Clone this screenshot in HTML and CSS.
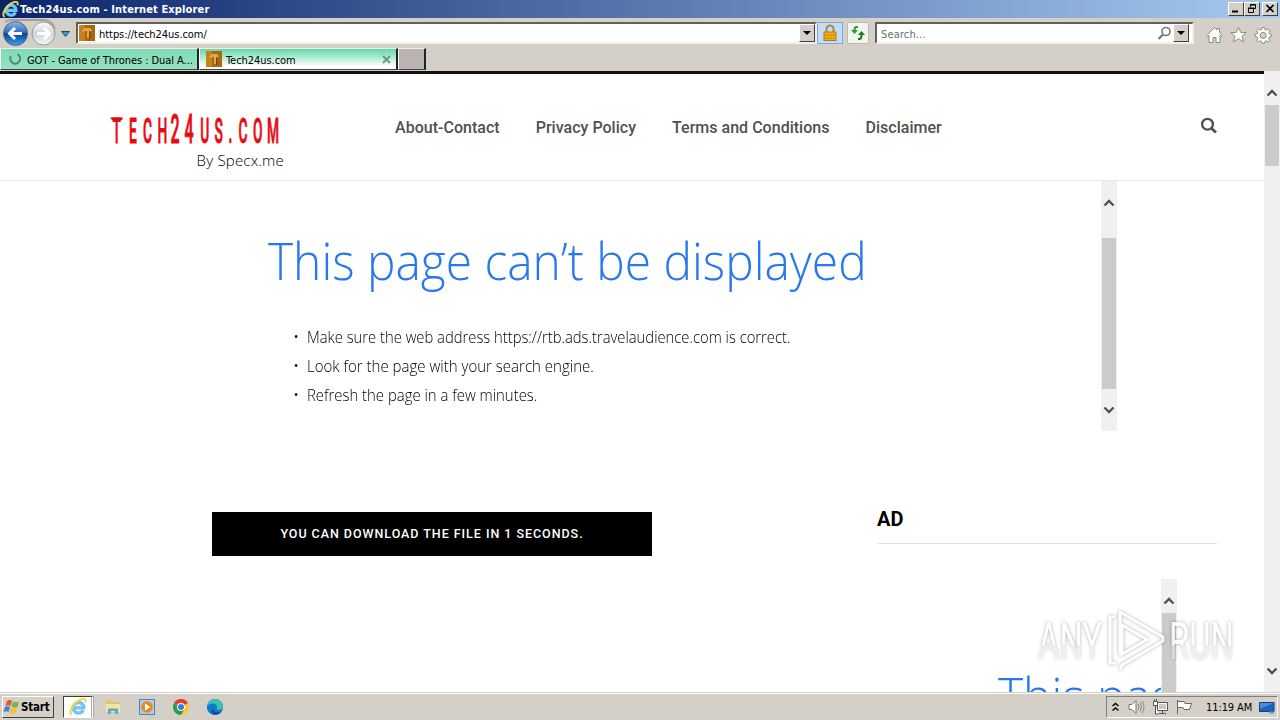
FILE: index.html
```html
<!DOCTYPE html>
<html lang="en">
<head>
    <meta charset="UTF-8">
    <title>Tech24us.com</title>
    <link rel="stylesheet" href="styles.css">
</head>
<body>
    <!-- shared icons -->
    <svg class="defs" width="0" height="0">
        <symbol id="ie" viewBox="0 0 16 16">
            <path d="M12.700 10.800A4.700 4.700 0 1 1 13.200 8.800H5" fill="none" stroke="#6cc5f4" stroke-width="3"/>
            <path d="M2.500 15C-1.500 13 4.500 3.500 10.500 1.300c3.500-1.200 5 .2 4 2.700" fill="none" stroke="#f5d83c" stroke-width="1.800"/>
        </symbol>
        <symbol id="favicon" viewBox="0 0 16 16">
            <rect width="16" height="16" fill="#a9670f"/>
            <path d="M0 0h6v16H0z" fill="#c5811c"/>
            <path d="M3 5.500 6 3h5l2 2-1 1.500L10 6v7H8V6H6L4 7z" fill="#e2a84e"/>
            <path d="M10 6v8h1.500V7z" fill="#7a4808"/>
        </symbol>
        <symbol id="up" viewBox="0 0 12 10">
            <path d="M1.500 7.500 6 3l4.500 4.500" fill="none" stroke="#505050" stroke-width="2.300"/>
        </symbol>
        <symbol id="down" viewBox="0 0 12 10">
            <path d="M1.500 2.500 6 7l4.500-4.500" fill="none" stroke="#505050" stroke-width="2.300"/>
        </symbol>
    </svg>

    <div class="titlebar">
        <svg class="title-icon" width="17" height="17"><use href="#ie"/></svg>
        <span class="title-text">Tech24us.com - Internet Explorer</span>
        <div class="win-buttons">
            <span class="win-btn"><svg width="14" height="11"><path d="M3 8.500h6" stroke="#000" stroke-width="2"/></svg></span>
            <span class="win-btn"><svg width="14" height="11"><path d="M5.500 4V1.500h5v4H9M5 2h6" fill="none" stroke="#000"/><path d="M3.500 5.500h5v4h-5zM3 5h6" fill="none" stroke="#000"/></svg></span>
            <span class="win-btn close"><svg width="14" height="11"><path d="M3.500 2l7 7M10.500 2l-7 7" stroke="#000" stroke-width="1.700"/></svg></span>
        </div>
    </div>

    <div class="toolbar">
        <svg class="nav-buttons" width="74" height="30" viewBox="0 0 74 30">
            <defs>
                <linearGradient id="blue" x1="0" y1="0" x2="0" y2="1">
                    <stop offset="0" stop-color="#8fb6e6"/><stop offset=".48" stop-color="#2f68bd"/>
                    <stop offset=".5" stop-color="#0b3d97"/><stop offset="1" stop-color="#39a6ee"/>
                </linearGradient>
                <linearGradient id="grey" x1="0" y1="0" x2="0" y2="1">
                    <stop offset="0" stop-color="#fff"/><stop offset=".5" stop-color="#cdd3da"/><stop offset="1" stop-color="#f4f7fa"/>
                </linearGradient>
            </defs>
            <path d="M5 4q5-3 12-2h26q9 0 12 9" fill="none" stroke="#a5a09a" stroke-width="2"/>
            <circle cx="15.500" cy="15.500" r="12" fill="url(#blue)" stroke="#52657f"/>
            <path d="M22 15.500H10M15 10l-5.500 5.500L15 21" fill="none" stroke="#fff" stroke-width="3"/>
            <circle cx="43.500" cy="15.500" r="11.500" fill="url(#grey)" stroke="#9097a0"/>
            <path d="M37 15.500h12M44 10l5.500 5.500L44 21" fill="none" stroke="#fff" stroke-width="3"/>
            <path d="M61.500 13.500h8l-4 5z" fill="#2aa0d8" stroke="#174a78"/>
        </svg>
        <div class="field address">
            <svg width="16" height="16"><use href="#favicon"/></svg>
            <span class="url">https://tech24us.com/</span>
            <span class="drop"></span>
        </div>
        <span class="lock">
            <svg width="16" height="18" viewBox="0 0 16 18">
                <path d="M4.500 9V5a3.500 3.500 0 0 1 7 0v4" fill="none" stroke="#a88a45" stroke-width="2"/>
                <rect x="2" y="8" width="12" height="8.500" fill="#efad16" stroke="#b97d0c"/>
                <path d="M2 11h12M2 14h12" stroke="#c98a0b"/>
            </svg>
        </span>
        <span class="refresh">
            <svg width="16" height="16" viewBox="0 0 16 16">
                <path d="M8 2H6.500Q4.500 2 4.500 5" fill="none" stroke="#2f9a35" stroke-width="2"/>
                <path d="M1 5h7l-3.500 4z" fill="#2f9a35"/>
                <path d="M8 14h1.500q2 0 2-4" fill="none" stroke="#207a26" stroke-width="2"/>
                <path d="M8 10h7l-3.500-4z" fill="#207a26"/>
            </svg>
        </span>
        <div class="field search">
            <span class="hint">Search...</span>
            <svg width="15" height="15" viewBox="0 0 15 15"><circle cx="9" cy="5.500" r="4" fill="none" stroke="#777" stroke-width="1.600"/><path d="M6 8.500 1.500 13" stroke="#777" stroke-width="2.200"/></svg>
            <span class="drop"></span>
        </div>
        <svg class="tools" width="70" height="20" viewBox="0 0 70 20">
            <g fill="#fff" stroke="#8d8985">
                <path d="M1.500 10.500 9.500 2.500l2.500 2.500V3.500h2.500V7.500l3 3-1 1-1.500-1.200V17.500h-4v-5h-3v5h-4v-7L2.500 11.500z"/>
                <path d="M33.500 2.500l2.300 5h5.400l-4.200 3.700 1.600 5.800-5.100-3.300-5.100 3.300 1.600-5.800-4.200-3.700h5.400z"/>
                <path d="M57 2.500h2.500l.4 2 1.400.6 1.800-1.200 1.700 1.700-1.100 1.800.6 1.400 2 .4v2.400l-2 .4-.6 1.400 1.100 1.800-1.700 1.700-1.800-1.100-1.400.6-.4 2H57l-.4-2-1.400-.6-1.800 1.100-1.700-1.700 1.100-1.800-.6-1.400-2-.4V9.200l2-.4.6-1.400-1.100-1.800 1.700-1.700 1.800 1.200 1.400-.6z"/>
                <circle cx="58.200" cy="10.400" r="3" fill="#d4d0c8"/>
            </g>
        </svg>
    </div>

    <div class="tabs">
        <div class="tab loading">
            <svg width="14" height="14" viewBox="0 0 14 14"><path d="M9.500 2.200A5 5 0 1 1 3 4" fill="none" stroke="#57877a" stroke-width="2"/></svg>
            <span class="tab-one">GOT - Game of Thrones : Dual A...</span>
        </div>
        <div class="tab active">
            <svg width="16" height="16"><use href="#favicon"/></svg>
            <span class="tab-two">Tech24us.com</span>
            <svg class="tab-close" width="9" height="9"><path d="M1 1l7 7M8 1 1 8" stroke="#6f9487" stroke-width="1.800"/></svg>
        </div>
        <div class="tab new"></div>
    </div>

    <div class="viewport">
        <div class="page">
            <header class="site-header">
                <div class="logo">
                    <svg width="175" height="36" viewBox="0 0 175 36">
                        <g fill="#ea0a12" stroke="#ea0a12" stroke-width=".9" font-family="Roboto, sans-serif" font-weight="500">
                            <text transform="translate(0 31.500) scale(.4 1)" font-size="34.500" x="9 50 85 121 154 189 228 264 299 324 360 395">TECH<tspan font-size="40">24</tspan>US.COM</text>
                        </g>
                        <path d="M1 6.500h13l-1 2.500H3z" fill="#d40d18"/>
                    </svg>
                    <span class="byline">By Specx.me</span>
                </div>
                <nav>
                    <a>About-Contact</a>
                    <a>Privacy Policy</a>
                    <a>Terms and Conditions</a>
                    <a>Disclaimer</a>
                </nav>
                <svg class="find" width="18" height="18" viewBox="0 0 18 18"><circle cx="7.500" cy="7.200" r="5.400" fill="none" stroke="#505050" stroke-width="2.300"/><path d="M11 11l5 4.500" stroke="#505050" stroke-width="2.800"/></svg>
            </header>

            <div class="banner">
                <div class="error">
                    <h1>This page can’t be displayed</h1>
                    <ul>
                        <li><span>Make sure the web address https://rtb.ads.travelaudience.com is correct.</span></li>
                        <li><span class="line-two">Look for the page with your search engine.</span></li>
                        <li><span class="line-three">Refresh the page in a few minutes.</span></li>
                    </ul>
                </div>
                <div class="scrollbar inner">
                    <svg width="12" height="10"><use href="#up"/></svg>
                    <span class="thumb"></span>
                    <svg width="12" height="10"><use href="#down"/></svg>
                </div>
            </div>

            <div class="columns">
                <main>
                    <div class="download">YOU CAN DOWNLOAD THE FILE IN 1 SECONDS.</div>
                </main>
                <aside>
                    <h2>AD</h2>
                    <div class="ad-frame">
                        <div class="ad-error"><h1>This page can’t be displayed</h1></div>
                        <div class="scrollbar ad-scroll">
                            <svg width="12" height="10"><use href="#up"/></svg>
                            <span class="thumb"></span>
                        </div>
                    </div>
                </aside>
            </div>
        </div>
        <div class="scrollbar outer">
            <svg width="12" height="10"><use href="#up"/></svg>
            <span class="thumb"></span>
            <svg class="bottom" width="12" height="10"><use href="#down"/></svg>
        </div>
    </div>

    <div class="taskbar">
        <div class="start">
            <svg width="18" height="16" viewBox="0 0 18 16">
                <path d="M4 2q3-2 5 0L7.500 7q-2-1.500-5 0z" fill="#e2582b"/>
                <path d="M10 2.500q3 1.500 6 0L14.500 8q-3 1.500-6-.5z" fill="#7cb342"/>
                <path d="M2 8q3-1.500 5 0l-1.500 5q-2-1.500-5 0z" fill="#3d7fd6"/>
                <path d="M8 8.500q3 2 6 .5L12.500 14q-3 1.500-6-.5z" fill="#f5bd28"/>
            </svg>
            <span>Start</span>
        </div>
        <div class="task-active"><svg width="18" height="18"><use href="#ie"/></svg></div>
        <svg class="task-icon" width="16" height="16" viewBox="0 0 16 16">
            <path d="M1 3V1.500h5l1 1.500h7v11H1z" fill="#e5c467"/>
            <path d="M1 5h14v8H1z" fill="#f6e3a0"/>
            <path d="M3 15V9.500h10V15h-3v-3H6v3z" fill="#58a9d8"/>
        </svg>
        <svg class="task-icon" width="16" height="16" viewBox="0 0 16 16">
            <rect x=".5" y=".5" width="15" height="15" fill="#a9cdeb" stroke="#4f84b8"/>
            <circle cx="8" cy="8" r="5.800" fill="#f08519"/>
            <path d="M6 4.500 11.500 8 6 11.500z" fill="#fff"/>
        </svg>
        <svg class="task-icon" width="16" height="16" viewBox="0 0 16 16">
            <circle cx="8" cy="8" r="8" fill="#fcc934"/>
            <path d="M8 8 1.070 4A8 8 0 0 1 14.930 4z" fill="#e33b2e"/>
            <path d="M1.070 4A8 8 0 0 0 8 16l3.500-6L8 8z" fill="#2a9d4c"/>
            <circle cx="8" cy="8" r="4" fill="#fff"/>
            <circle cx="8" cy="8" r="3" fill="#3b78e7"/>
        </svg>
        <svg class="task-icon" width="16" height="16" viewBox="0 0 16 16">
            <circle cx="8" cy="8" r="8" fill="#0f6fc4"/>
            <path d="M0 8a8 8 0 0 1 16 0c0 3-5 4-6.500 2C11 7 8 4 0 8z" fill="#38c4b0"/>
            <path d="M0 8c1-4 9-5 10 0 .5 2-1 2-.5 3 1 1.500 4 1.500 5.500.5A8 8 0 0 1 0 8z" fill="#1478cc"/>
            <path d="M6 8.500c-1 4 3 6.500 8 4-3 4-8 4-9 .5-.5-2 0-3.500 1-4.500z" fill="#0b4c94"/>
        </svg>
        <div class="tray">
            <svg class="chevrons" width="7" height="10"><path d="M.5 4 3.500 1.500 6.500 4M.5 8.500 3.500 6l3 2.500" fill="none" stroke="#000" stroke-width="1.400"/></svg>
            <svg width="17" height="16" viewBox="0 0 17 16"><path d="M1 5.500h3l4-4v13l-4-4H1z" fill="#fff" stroke="#777"/><path d="M10 5q2 3 0 6M12 3.500q3 4.500 0 9M14 2q4 6 0 12" fill="none" stroke="#888"/></svg>
            <svg width="17" height="16" viewBox="0 0 17 16"><path d="M5.500 3.500h10v8h-10zM7 14.500h7M10.500 12v2" fill="#fff" stroke="#555"/><path d="M7 5h7v5H7z" fill="#c8c8c8"/><path d="M1.500 2.500h4v4h-4zM2.500 0v3M4.500 0v3M3.500 6v9h3" fill="#fff" stroke="#555"/></svg>
            <svg width="17" height="16" viewBox="0 0 17 16"><path d="M1.500 1v14M2 2.500h6l1 2h6.500l-2 6H8l-1-2H2" fill="#fff" stroke="#666"/></svg>
            <span class="clock">11:19 AM</span>
            <svg width="16" height="13" viewBox="0 0 16 13"><path d="M.5 1.500h14.500v9H.5z" fill="#1c62bb" stroke="#153f7b"/><path d="M1 2h13.500L1 8z" fill="#478bd9"/><path d="M10 11.500h5" stroke="#4fa4ed" stroke-width="2"/></svg>
        </div>
    </div>

    <svg class="watermark" width="214" height="76" viewBox="0 0 214 76">
        <defs>
            <linearGradient id="fade" x1="0" y1="0" x2="0" y2="1">
                <stop offset=".55" stop-color="#fff"/><stop offset=".57" stop-color="#fff" stop-opacity=".6"/>
            </linearGradient>
        </defs>
        <g font-family="Roboto, sans-serif" font-size="52" fill="url(#fade)">
            <text x="10" y="57" textLength="64" lengthAdjust="spacingAndGlyphs">ANY</text>
            <text x="141" y="57" textLength="65" lengthAdjust="spacingAndGlyphs">RUN</text>
        </g>
        <g fill="none" stroke="#fff" stroke-width="3">
            <path d="M92 53V10l43 25v4L94 63l-2 5"/>
            <path d="M94 23v29l25-14.500z"/>
            <path d="M87 15h-5v46h6"/>
        </g>
    </svg>
</body>
</html>
```
FILE: styles.css
```css
* {
    box-sizing: border-box;
}
body {
    margin: 0;
    width: 1280px;
    height: 720px;
    overflow: hidden;
    position: relative;
    display: flex;
    flex-direction: column;
    background: #d4d0c8;
    font-family: "DejaVu Sans Condensed", "DejaVu Sans", sans-serif;
    font-size: 11px;
    color: #000;
}
svg {
    display: block;
    flex: none;
}
.defs {
    position: absolute;
}
span, a, h1 {
    white-space: nowrap;
}

/* window chrome */
.titlebar {
    flex: none;
    display: flex;
    align-items: center;
    height: 18px;
    padding: 0 2px;
    background: linear-gradient(to right, #0a246a, #a6caf0);
    color: #fff;
    font-weight: bold;
}
.title-text {
    margin-left: 1px;
    letter-spacing: .13px;
}
.win-buttons {
    display: flex;
    margin-left: auto;
}
.win-btn {
    width: 16px;
    height: 14px;
    background: #d4d0c8;
    border: 1px solid;
    border-color: #fff #404040 #404040 #fff;
}
.close {
    margin-left: 2px;
}
.toolbar {
    flex: none;
    display: flex;
    align-items: center;
    height: 30px;
    background: #d4d0c8;
}
.field {
    display: flex;
    align-items: center;
    height: 22px;
    background: #fff;
    border: 2px solid;
    border-color: #606060 #f2f0ec #f2f0ec #606060;
}
.address {
    width: 741px;
    margin-left: 2px;
    padding-left: 1px;
}
.url {
    margin: 2px 0 0 4px;
    letter-spacing: -.05px;
}
.drop {
    width: 16px;
    height: 18px;
    margin-left: auto;
    background: #d4d0c8;
    border: 1px solid;
    border-color: #fff #404040 #404040 #fff;
}
.drop::after {
    content: "";
    display: block;
    margin: 6px 0 0 3px;
    width: 0;
    border: 4px solid transparent;
    border-top-color: #000;
    border-bottom: 0;
}
.lock {
    width: 26px;
    height: 22px;
    padding: 1px 4px;
    background: #c5dcf7;
    border: 1px solid #78a9e0;
}
.refresh {
    width: 22px;
    height: 22px;
    margin-left: 4px;
    padding: 2px;
    background: #f1f4ef;
    border: 1px solid #bdbab4;
    border-radius: 2px;
}
.search {
    width: 319px;
    margin-left: 6px;
    padding-right: 3px;
}
.hint {
    margin: 2px auto 0 4px;
    color: #6d6d6d;
    letter-spacing: .15px;
}
.search .drop {
    margin-left: 1px;
}
.tools {
    margin: 3px 0 0 11px;
}
.tabs {
    flex: none;
    display: flex;
    height: 23px;
}
.tab {
    display: flex;
    align-items: center;
    height: 22px;
    border: 1px solid;
    border-color: #eee #222 #444 #fff;
    border-right-width: 2px;
}
.loading {
    width: 199px;
    padding-left: 7px;
    background: linear-gradient(#7fdab5, #95e3c2);
}
.tab-one {
    margin: 2px 0 0 5px;
    letter-spacing: -.06px;
}
.active {
    width: 199px;
    padding: 0 5px 0 6px;
    background: linear-gradient(#5fd9a6, #fff 85%);
}
.tab-two {
    margin: 2px 0 0 4px;
    letter-spacing: -.05px;
}
.tab-close {
    margin-left: auto;
}
.new {
    width: 28px;
    background: #bbb3b2;
}

/* page area */
.viewport {
    flex: none;
    display: flex;
    height: 621px;
    background: #fff;
}
.page {
    width: 1264px;
    overflow: hidden;
    border-top: 3px solid #111;
    font-family: Roboto, sans-serif;
}
.site-header {
    display: flex;
    height: 107px;
    border-bottom: 1px solid #e8e8e8;
}
.logo {
    width: 175px;
    margin: 37px 0 0 109px;
}
.byline {
    display: block;
    margin-top: 3px;
    text-align: right;
    font-family: "Open Sans", sans-serif;
    font-weight: 300;
    font-size: 15px;
    line-height: 20px;
    letter-spacing: .2px;
}
nav {
    display: flex;
    gap: 36px;
    margin: 44px 0 0 111px;
    font-size: 16px;
    line-height: 19px;
    font-weight: 500;
    letter-spacing: .02px;
    color: #505050;
}
.find {
    margin: 43px 46px 0 auto;
}
.banner {
    display: flex;
    width: 970px;
    height: 250px;
    margin-left: 147px;
}
.error {
    flex: 1;
    padding: 44px 0 0 121px;
    font-family: "Open Sans", sans-serif;
    font-weight: 300;
}
h1 {
    margin: 0;
    font-family: "Open Sans", sans-serif;
    font-size: 51px;
    line-height: 70px;
    font-weight: 300;
    color: #2778ec;
    transform-origin: left;
    transform: scaleX(.939);
}
ul {
    margin: 27px 0 0;
    padding: 0 0 0 25px;
    list-style: none;
}
li {
    display: flex;
    height: 29px;
    font-size: 16px;
    line-height: 30px;
}
li::before {
    content: "•";
    width: 14px;
}
li span {
    transform-origin: left;
    transform: scaleX(.924);
}
li .line-two {
    transform: scaleX(.939);
}
li .line-three {
    transform: scaleX(.931);
}
.scrollbar {
    flex: none;
    display: flex;
    flex-direction: column;
    align-items: center;
    width: 16px;
    background: #f0f0f0;
}
.thumb {
    width: 14px;
    background: #cbcbcb;
}
.inner {
    padding-top: 17px;
}
.inner .thumb {
    height: 151px;
    margin: 30px 0 16px;
}
.outer {
    padding-top: 17px;
}
.outer .thumb {
    height: 61px;
    margin-top: 7px;
}
.bottom {
    margin: auto 0 16px;
}
.columns {
    display: flex;
    margin-left: 212px;
}
main {
    width: 665px;
    padding-top: 81px;
}
.download {
    width: 440px;
    height: 44px;
    line-height: 44px;
    background: #000;
    color: #fff;
    font-size: 12.5px;
    font-weight: 500;
    letter-spacing: .96px;
    text-align: center;
}
aside {
    width: 340px;
    padding-top: 76px;
}
h2 {
    height: 37px;
    margin: 0 0 35px;
    border-bottom: 1px solid #e1e1e1;
    font-size: 20px;
    line-height: 25px;
    font-weight: 700;
}
.ad-frame {
    display: flex;
    width: 300px;
    height: 250px;
}
.ad-error {
    flex: 1;
    overflow: hidden;
    padding: 81px 0 0 121px;
}
.ad-scroll {
    padding-top: 17px;
}
.ad-scroll .thumb {
    height: 150px;
    margin-top: 7px;
}

/* taskbar */
.taskbar {
    flex: none;
    display: flex;
    align-items: center;
    height: 28px;
    border-top: 1px solid #d4d0c8;
    box-shadow: inset 0 1px #fff;
    padding: 1px 2px 0;
}
.start {
    display: flex;
    align-items: center;
    width: 52px;
    height: 22px;
    border: 1px solid;
    border-color: #fff #404040 #404040 #fff;
    font-weight: bold;
    font-size: 11.5px;
    letter-spacing: -.2px;
}
.task-active {
    display: flex;
    justify-content: center;
    align-items: center;
    width: 31px;
    height: 22px;
    margin: 0 11px 0 9px;
    background: #fff;
    border: 1px solid;
    border-color: #404040 #fff #fff #404040;
    border-right: 3px double #aaa;
}
.task-icon {
    margin-right: 18px;
}
.tray {
    display: flex;
    align-items: center;
    gap: 7px;
    width: 172px;
    height: 22px;
    margin-left: auto;
    padding-left: 5px;
    border: 1px solid;
    border-color: #808080 #fff #fff #808080;
}
.chevrons {
    margin-right: 2px;
}
.clock {
    margin: 0 0 0 6px;
    letter-spacing: -.1px;
}
.watermark {
    position: absolute;
    left: 1028px;
    top: 602px;
    opacity: .85;
    filter: drop-shadow(0 0 1px rgba(0, 0, 0, .25)) drop-shadow(0 0 2px rgba(0, 0, 0, .18));
}
```
